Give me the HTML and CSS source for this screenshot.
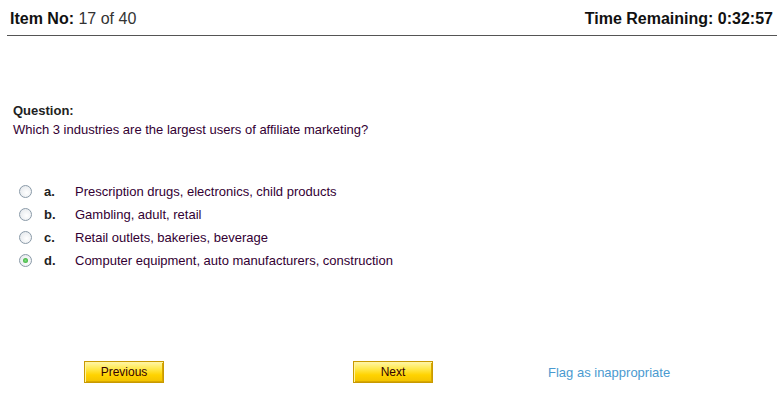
FILE: index.html
```html
<!DOCTYPE html>
<html>
<head>
<meta charset="utf-8">
<link rel="stylesheet" href="styles.css">
</head>
<body>
<div class="header">
  <div class="item"><b>Item No:</b> 17 of 40</div>
  <div class="time">Time Remaining: 0:32:57</div>
</div>
<div class="question">
  <div class="qlabel">Question:</div>
  <div class="qtext">Which 3 industries are the largest users of affiliate marketing?</div>
</div>
<div class="options">
  <div class="opt"><span class="radio"></span><span class="letter">a.</span><span class="otext">Prescription drugs, electronics, child products</span></div>
  <div class="opt"><span class="radio"></span><span class="letter">b.</span><span class="otext">Gambling, adult, retail</span></div>
  <div class="opt"><span class="radio"></span><span class="letter">c.</span><span class="otext">Retail outlets, bakeries, beverage</span></div>
  <div class="opt"><span class="radio checked"></span><span class="letter">d.</span><span class="otext">Computer equipment, auto manufacturers, construction</span></div>
</div>
<div class="nav">
  <span class="btn prev">Previous</span>
  <span class="btn next">Next</span>
  <a class="flag" href="#">Flag as inappropriate</a>
</div>
</body>
</html>
```
FILE: styles.css
```css
html, body {
  margin: 0;
  padding: 0;
  background: #fff;
  font-family: "Liberation Sans", Arial, sans-serif;
}
.header {
  display: flex;
  justify-content: space-between;
  align-items: flex-end;
  margin: 0 4px 0 7px;
  padding: 0 4px 7px 3px;
  height: 28px;
  border-bottom: 1px solid #555;
  font-size: 16px;
}
.item {
  color: #333;
}
.item b {
  color: #111;
}
.time {
  font-weight: bold;
  color: #111;
}
.question {
  padding: 65px 0 0 13px;
  font-size: 13px;
  line-height: 19px;
}
.qlabel {
  font-weight: bold;
  color: #222;
}
.qtext {
  color: #330033;
}
.options {
  padding-top: 41px;
  font-size: 13px;
}
.opt {
  display: flex;
  align-items: center;
  height: 23px;
}
.radio {
  box-sizing: border-box;
  width: 13px;
  height: 13px;
  border-radius: 50%;
  border: 1px solid #8a9aa8;
  background: radial-gradient(circle at 60% 60%, #ffffff 0%, #e9ecef 70%, #d4d9de 100%);
  margin-left: 19px;
  margin-right: 12px;
  display: flex;
  align-items: center;
  justify-content: center;
}
.radio.checked::after {
  content: "";
  width: 5px;
  height: 5px;
  border-radius: 50%;
  background: radial-gradient(circle, #7ee07e 0%, #2ca02c 100%);
}
.letter {
  font-weight: bold;
  color: #222;
  width: 31px;
}
.otext {
  color: #330033;
}
.nav {
  display: flex;
  align-items: center;
  padding: 89px 0 0 84px;
}
.btn {
  box-sizing: border-box;
  width: 80px;
  height: 22px;
  display: flex;
  align-items: center;
  justify-content: center;
  font-size: 12px;
  color: #330000;
  border: 1px solid #c99a00;
  box-shadow: inset 1px 1px 0 #fff3a0, inset -1px -1px 0 #d8a800;
  background: linear-gradient(#fff6a8 0%, #ffe84a 35%, #ffd300 65%, #f2c200 100%);
}
.next {
  margin-left: 189px;
}
.flag {
  margin-left: 115px;
  font-size: 13px;
  color: #4a9ad0;
  text-decoration: none;
}
```
